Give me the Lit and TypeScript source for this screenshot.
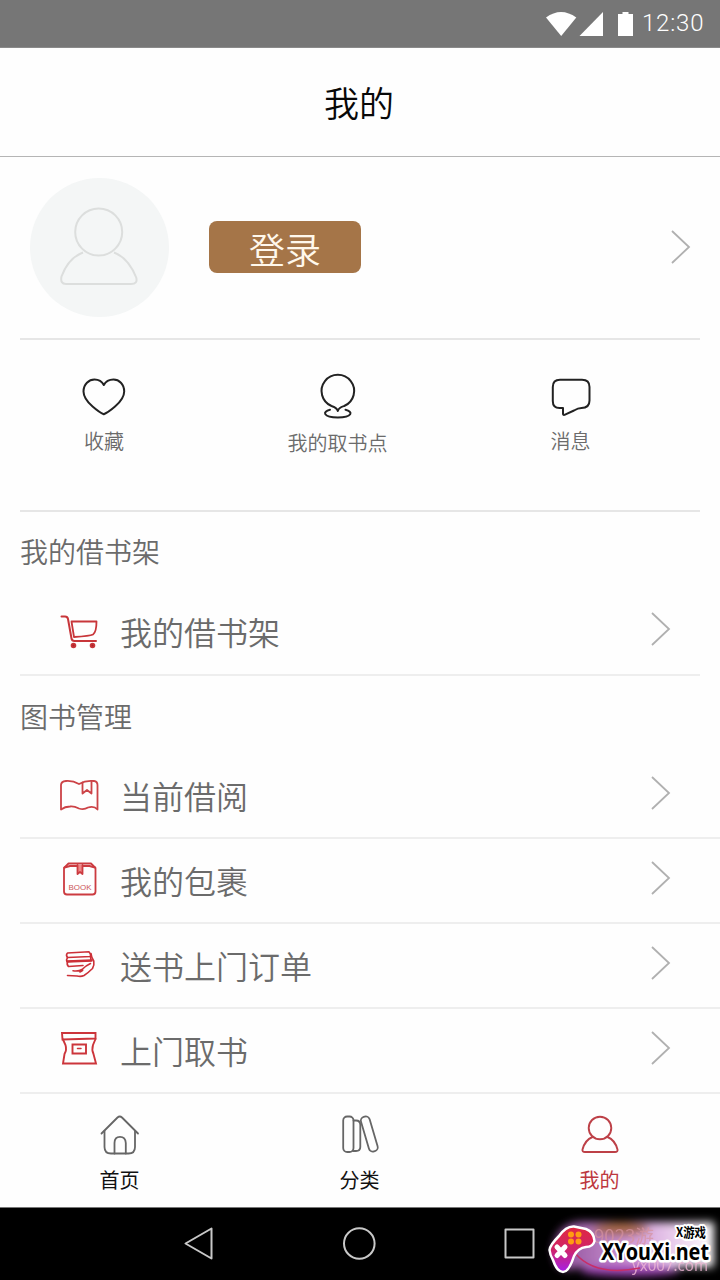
import { LitElement, html, css, svg, TemplateResult } from "lit";
import { customElement } from "lit/decorators.js";

const chevron = html`<svg class="chevron" width="22" height="38" viewBox="0 0 22 38">
  <path d="M2 3 L19 19 L2 35" fill="none" stroke="#b0b0b0" stroke-width="1.8" />
</svg>`;

const icon = (x: number, y: number, w: number, h: number, body: unknown): TemplateResult =>
  html`<svg class="icon" width=${w} height=${h} viewBox="${x} ${y} ${w} ${h}" fill="none" stroke-linejoin="round" stroke-linecap="round">${body}</svg>`;

const cart = icon(58, 608, 42, 42, svg`<g stroke="#c8363a" stroke-width="1.8">
  <path d="M61.500 615.500H65Q67.500 615.500 68 618L71.500 637.500Q72 640 74.500 640H96" stroke-width="2"/>
  <path d="M71.500 620.500H96.500Q96.500 631 93 633.500Q90 635 74 636Z"/>
  <circle cx="73.500" cy="644.500" r="1.900" fill="#a92328"/><circle cx="92.500" cy="644.500" r="1.900" fill="#a92328"/></g>`);

const book = icon(58, 773, 42, 42, svg`<g stroke="#cc4347" stroke-width="1.800">
  <path d="M61 809.500V785Q61 781.500 66 781Q73 780.500 79 784Q86 780 94 781Q97.500 781.500 97.500 785V809.500Q94 805.500 88 807.500Q84 810 79 808.500Q74 806 70 806.500Q65 806.500 61 809.500Z"/>
  <path d="M82.500 782.500V793.500L87 790L91.500 793.500V781.500"/></g>`);

const pack = icon(58, 858, 42, 42, svg`<g stroke="#cc3b40" stroke-width="1.800">
  <path d="M64 868V891.500Q64 894.500 67 894.500H92.500Q95.500 894.500 95.500 891.500V868L91 863.500H68.500Z"/>
  <path d="M64.500 867.500L70 866H89.500L95 867.500" stroke-width="2"/>
  <path d="M77.500 865V874L80 872L82.500 874V865" fill="#e88"/></g>
  <text class="tiny" x="80" y="890" text-anchor="middle" textLength="23" lengthAdjust="spacingAndGlyphs">BOOK</text>`);

const hand = icon(58, 943, 42, 42, svg`<g stroke="#cc3038" stroke-width="1.600">
  <path d="M67.500 953L89 951.800Q91 953.500 90.500 956.500L67.500 957.500Q65.500 955 67.500 953Z"/>
  <path d="M67.500 957.500Q66 960 67 961.500L91 960.500L90.500 956.500"/>
  <path d="M67.500 961.500L91.500 960.500" stroke-width="2.600"/>
  <path d="M67.500 962Q66.500 965 68.500 966.500L83 965.500"/>
  <path d="M91 953.500Q91.500 958 93.800 961Q94.500 965 92.500 968.500Q88 973 84 975.500Q81 977 77 976L67.500 975.500"/>
  <path d="M73 970.800Q79 971.500 82 969.500Q86 965.500 90.500 963.500M82 969.500Q84 970.500 80 972"/></g>`);

const parcel = icon(58, 1028, 42, 42, svg`<g stroke="#cc353b" stroke-width="1.900" stroke-linejoin="miter">
  <path d="M62 1033H95.500V1038.500L62.500 1039.500Z"/>
  <path d="M63 1039.500L65.500 1045Q67 1050 64.500 1054L63 1063.500H96L93.500 1054Q91.500 1050 93 1045L95.500 1039"/>
  <path d="M72.500 1044.500H86V1053.500H72.500Z"/><path d="M77.500 1048.500H81" stroke-width="1.500"/></g>`);

const rows: { icon: TemplateResult; label: string }[] = [
  { icon: book, label: "当前借阅" },
  { icon: pack, label: "我的包裹" },
  { icon: hand, label: "送书上门订单" },
  { icon: parcel, label: "上门取书" },
];

const quick = [
  { cls: "fav", label: "收藏", icon: icon(80, 372, 48, 48, svg`<path stroke="#222" stroke-width="2" d="M103.800 414.200C101 413.200 83.500 402.500 83.500 391.500C83.500 384 89 379.500 94.500 379.500C99 379.500 102 381.500 103.800 385C105.600 381.500 109 379.500 113.500 379.500C119 379.500 124.200 384 124.200 391.500C124.200 402.500 106.500 413.200 103.800 414.200Z"/>`) },
  { cls: "spot", label: "我的取书点", icon: icon(314, 372, 48, 48, svg`<g stroke="#222" stroke-width="2"><path d="M337.800 411C336.800 407.500 334.500 407 331.500 406A16.300 16.300 0 1 1 344.200 406C341 407 338.800 407.500 337.800 411Z"/><path d="M330 409.800C322 411.500 323 417.500 337.800 417.500S353.500 411.500 345.500 409.800"/></g>`) },
  { cls: "msg", label: "消息", icon: icon(547, 372, 48, 48, svg`<path stroke="#222" stroke-width="2" d="M560 379.800H582Q589.500 379.800 589.500 387V400.500Q589.500 408 581.500 408Q578 408 574 410.500L564.500 414.800Q563 415.300 563 413.500V408H559.500Q552.800 408 552.800 401V387Q552.800 379.800 560 379.800Z"/>`) },
];

const tabs = [
  { cls: "", label: "首页", icon: icon(96, 1112, 48, 48, svg`<g stroke="#666" stroke-width="1.800"><path d="M101.500 1133.500L117.500 1117.500Q119.800 1115.500 122 1117.500L138 1133.500"/><path d="M104.500 1131V1147Q104.500 1153.500 111 1153.500H128.500Q135 1153.500 135 1147V1131"/><path d="M114.500 1153.500V1143Q114.500 1136.800 120 1136.800T125.800 1143V1153.500"/></g>`) },
  { cls: "", label: "分类", icon: icon(335, 1112, 48, 48, svg`<g stroke="#666" stroke-width="1.800"><rect x="342.200" y="1116.500" width="10.300" height="35.500" rx="4"/><path d="M352.500 1120.500H355Q359.300 1120.500 359.300 1125V1147Q359.300 1151 355 1151H352"/><rect x="363.800" y="1116" width="9" height="36" rx="4" transform="rotate(-16.500 368.300 1134)"/></g>`) },
  { cls: "active", label: "我的", icon: icon(575, 1112, 48, 48, svg`<g stroke="#bd4047" stroke-width="1.900"><circle cx="599" cy="1128" r="11.300"/><path d="M591.500 1137Q584 1140 581.500 1149.500Q581 1152 584 1152H614Q617 1152 616.500 1149.500Q614 1140 606.500 1137"/></g>`) },
];

@customElement("app-root")
export class AppRoot extends LitElement {
  static styles = css`
    :host { display: flex; flex-direction: column; width: 720px; height: 1280px; position: relative; overflow: hidden; background: #fefefe; color: #6b6b6b; font-family: "Noto Sans CJK SC", sans-serif; font-weight: 350; }
    * { box-sizing: border-box; }
    svg { display: block; flex: none; }
    .status { height: 48px; flex: none; background: #767676; border-bottom: 1px solid #8a8a8a; display: flex; align-items: center; justify-content: flex-end; padding-right: 15px; gap: 6px; }
    .clock { font: 300 24px/47px Roboto, sans-serif; letter-spacing: .8px; color: #fff; width: 63px; white-space: nowrap; }
    .head { height: 109px; flex: none; border-bottom: 1px solid #b5b5b5; text-align: center; font-size: 35px; line-height: 107px; color: #080808; padding-right: 2px; }
    .profile { height: 183px; flex: none; margin: 0 20px; border-bottom: 2px solid #e6e6e6; display: flex; align-items: center; padding: 0 8px 1px 10px; }
    .avatar { width: 139px; height: 139px; border-radius: 50%; background: #f4f6f6; }
    .login { width: 152px; height: 52px; margin-left: 40px; border-radius: 8px; background: #a57548; color: #fff8ec; font-size: 36px; line-height: 54px; text-align: center; }
    .chevron { margin-left: auto; }
    .quick { height: 172px; flex: none; margin: 0 20px; border-bottom: 2px solid #e6e6e6; display: grid; grid-template-columns: 168px 299px 167px; padding-top: 32px; }
    .cell { display: flex; flex-direction: column; align-items: center; font-size: 20px; line-height: 28px; }
    .fav span, .msg span { margin-top: 7px; }
    .spot span { margin-top: 9px; }
    .title { padding-left: 20px; font-size: 28px; line-height: 79px; height: 78px; flex: none; }
    .title.second { height: 78px; line-height: 80px; }
    .row { flex: none; height: 85px; margin-left: 20px; padding: 0 48px 5px 38px; border-bottom: 2px solid #eee; display: flex; align-items: center; font-size: 32px; line-height: 48px; }
    .row .icon { margin-top: 1px; }
    .row .label { margin-left: 20px; padding-top: 4px; }
    .row.solo { height: 86px; margin-right: 20px; padding-right: 28px; padding-bottom: 6px; }
    .row.solo .label { padding-top: 3px; }
    .tiny { font: 400 8px "Liberation Sans", sans-serif; fill: #cc5558; }
    .tabs { flex: none; height: 114px; display: grid; grid-template-columns: 239px 241px 239px; padding-top: 18px; border-bottom: 1px solid #777; background: #fefefe; }
    .tab { display: flex; flex-direction: column; align-items: center; font-size: 20px; line-height: 28px; color: #111; gap: 6px; font-weight: 400; }
    .tab.active { color: #bd3840; }
    .nav { flex: 1; background: #000; display: grid; grid-template-columns: 159px 160px 160px; justify-content: center; justify-items: center; padding: 12px 2px 0 0; }
    .mark { position: absolute; left: 540px; top: 1208px; }
    .site { font: 700 24px "Noto Sans", "Open Sans", sans-serif; }
    .game { font: 700 13px "Noto Sans CJK SC", sans-serif; }
    .ghost { font: 400 18px "Noto Sans CJK SC", sans-serif; }
    .ghost.low { font: 400 16px "Noto Sans", sans-serif; }
  `;

  render() {
    return html`
      <div class="status">
        <svg width="92" height="28" viewBox="543 9 92 28" fill="#fff">
          <path d="M545 16.500Q560 5.500 575.300 16.500L560.200 35Z" /><path d="M578.500 35L602 11V35Z" /><path d="M617 13H621.500V11H627.500V13H632V35H617Z" />
        </svg>
        <span class="clock">12:30</span>
      </div>
      <div class="head">我的</div>
      <div class="profile">
        <div class="avatar">
          <svg width="139" height="139" viewBox="30 177 139 139" fill="none" stroke="#dcdedd" stroke-width="2">
            <circle cx="98.700" cy="231" r="23.500" />
            <path d="M83 251.500C71 256 65 266 61.500 275.500Q60 283 66 283H131Q138 283 136.200 276.500C132 266 126 256 114 251.500" />
          </svg>
        </div>
        <div class="login">登录</div>
        ${chevron}
      </div>
      <div class="quick">${quick.map((q) => html`<div class="cell ${q.cls}">${q.icon}<span>${q.label}</span></div>`)}</div>
      <div class="title">我的借书架</div>
      <div class="row solo">${cart}<span class="label">我的借书架</span>${chevron}</div>
      <div class="title second">图书管理</div>
      ${rows.map((r) => html`<div class="row">${r.icon}<span class="label">${r.label}</span>${chevron}</div>`)}
      <div class="tabs">${tabs.map((t) => html`<div class="tab ${t.cls}">${t.icon}<span>${t.label}</span></div>`)}</div>
      <div class="nav">
        ${icon(176, 1220, 48, 48, svg`<path stroke="#c8c8c8" stroke-width="2" d="M186.500 1243.500L212.500 1228.500V1258.500Z"/>`)}
        ${icon(335, 1220, 48, 48, svg`<circle stroke="#c8c8c8" stroke-width="2" cx="359.300" cy="1243.500" r="15.300"/>`)}
        ${icon(495, 1220, 48, 48, svg`<rect stroke="#c8c8c8" stroke-width="2" x="505.500" y="1229.500" width="28" height="28"/>`)}
      </div>
      <svg class="mark" width="180" height="72" viewBox="540 1208 180 72">
        <defs>
          <linearGradient id="pad" x1="0" y1="0" x2="0" y2="1"><stop offset="0" stop-color="#e02840" /><stop offset=".5" stop-color="#d02468" /><stop offset="1" stop-color="#a520e8" /></linearGradient>
          <linearGradient id="glow" x1="0" x2="1"><stop offset="0" stop-color="#8a4a96" /><stop offset=".5" stop-color="#d29bd8" /><stop offset="1" stop-color="#fff" /></linearGradient>
          <filter id="soft" x="-30%" y="-40%" width="160%" height="180%"><feGaussianBlur stdDeviation="4" /></filter>
        </defs>
        <g filter="url(#soft)">
          <path d="M553 1247Q558 1219 590 1222H714V1267H580Q554 1278 553 1247Z" fill="url(#glow)" />
          <ellipse cx="621" cy="1229" rx="28" ry="7" fill="#a56848" />
          <ellipse cx="630" cy="1270" rx="50" ry="6" fill="#a247b8" />
        </g>
        <text class="ghost" x="594" y="1243" fill="#d6929f" opacity=".7" textLength="60" lengthAdjust="spacingAndGlyphs">9023游</text>
        <text class="ghost low" x="632" y="1271" fill="#f1b8d6" opacity=".8" textLength="76" lengthAdjust="spacingAndGlyphs">yx007.com</text>
        <path d="M575 1253Q595 1277 640 1268" fill="none" stroke="#c72e68" stroke-width="1.500" />
        <path d="M549.500 1250Q550 1245 559 1236Q566 1226 574 1226.500L586 1229Q594 1232 594.500 1241Q593 1247 586 1247Q578 1248 574 1256Q569 1272 563 1272Q557 1272 553 1260Q550 1255 549.500 1250Z" fill="url(#pad)" stroke="#fff" stroke-width="2.500" />
        <path d="M557 1247L565 1255.500M565 1247L557 1255.500" stroke="#fff" stroke-width="5" stroke-linecap="round" />
        <g fill="#ff9c12"><circle cx="571" cy="1234.500" r="3" /><circle cx="578.500" cy="1234.500" r="3" /><circle cx="571" cy="1241.500" r="3" /><circle cx="578.500" cy="1241.500" r="3" /></g>
        <g fill="#000" stroke="#fff" stroke-linejoin="round" paint-order="stroke">
          <text class="site" x="601" y="1260" stroke-width="5" textLength="108" lengthAdjust="spacingAndGlyphs">XYouXi.net</text>
          <text class="game" x="676" y="1237" stroke-width="4" textLength="30" lengthAdjust="spacingAndGlyphs">X游戏</text>
        </g>
      </svg>
    `;
  }
}
